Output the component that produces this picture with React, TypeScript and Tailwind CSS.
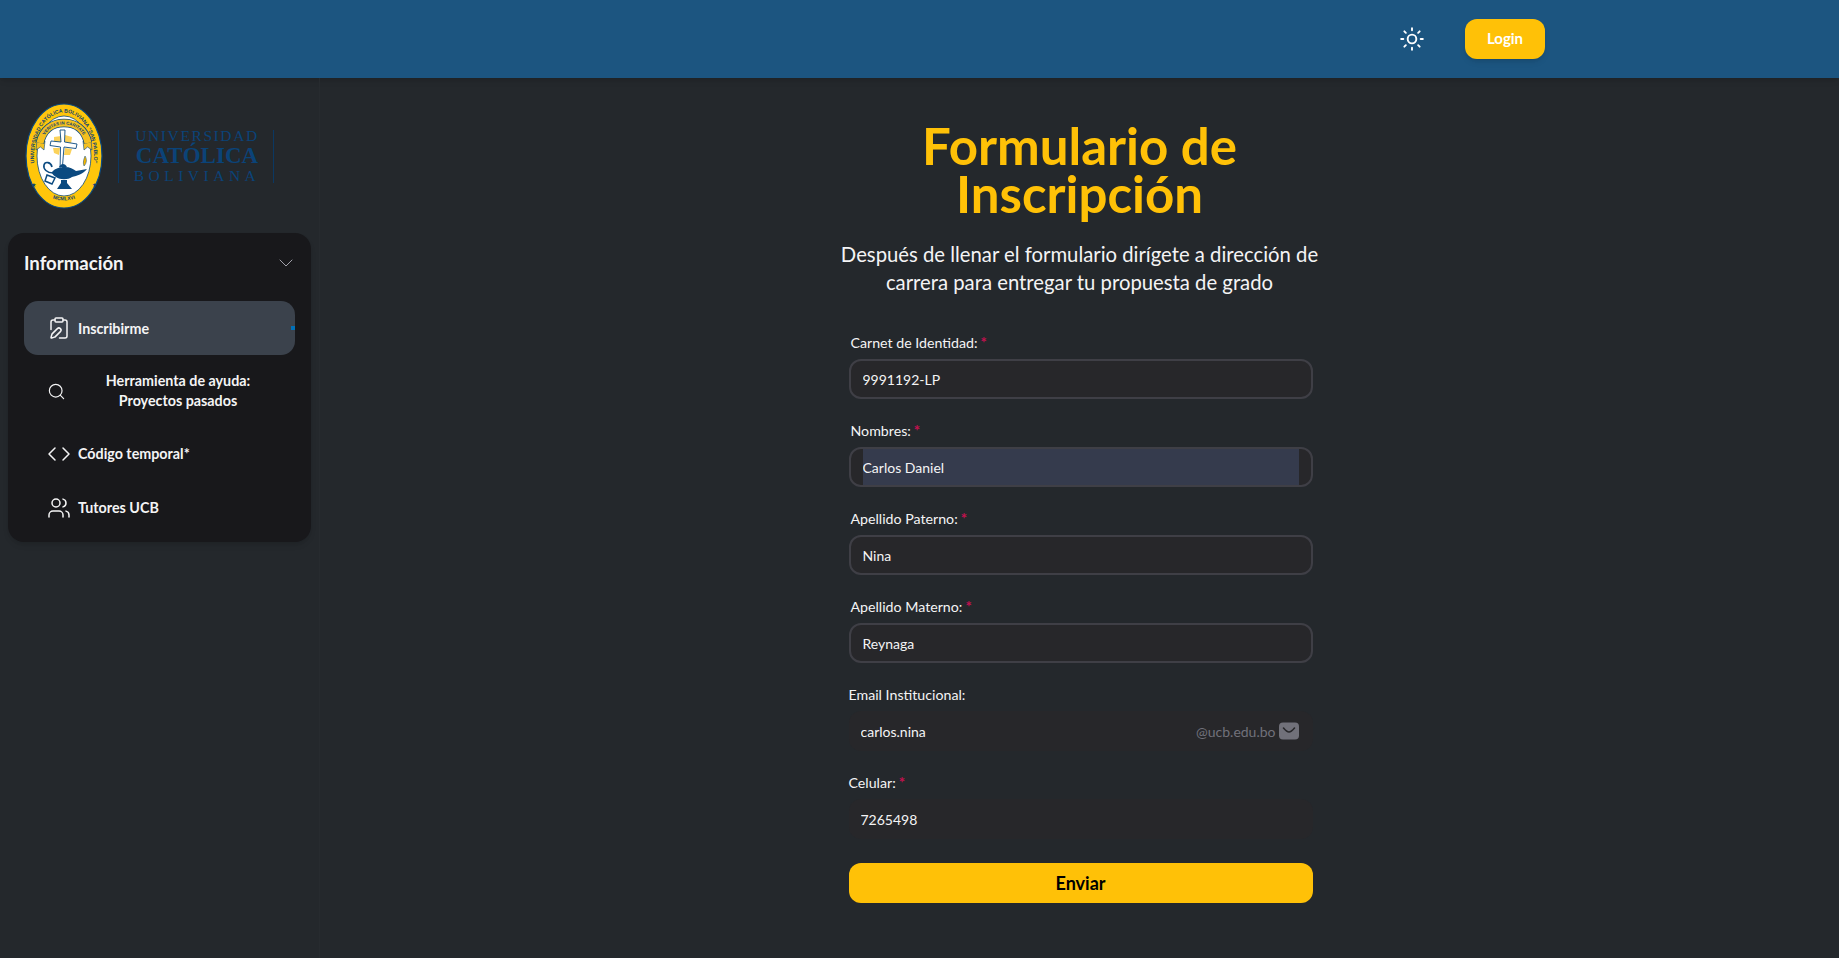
import { ChevronDown, ClipboardPen, Code, Search, Sun, Users } from 'lucide-react';
import type { ReactNode } from 'react';

const FONT = "font-['Lato','Noto_Sans',sans-serif]";

function Crest() {
  return (
    <svg viewBox="0 0 78 106" className="h-[106px] w-[78px] shrink-0">
      <defs>
        <path id="crest-arc" d="M13 74.750 A30 43.500 0 1 1 65 74.750" fill="none" />
        <path id="crest-motto" d="M16.500 41.500 C19.500 27.500 28 21.500 39 21.500 C50 21.500 58.500 27.500 61.500 41.500" fill="none" />
        <path id="crest-year" d="M24 94 Q39 101 54 94" fill="none" />
      </defs>
      <ellipse cx="39" cy="53" rx="38" ry="52" fill="#ffc60b" stroke="#0b4a80" strokeWidth="1.200" />
      <ellipse cx="39" cy="53" rx="27" ry="40" fill="#ffffff" stroke="#0b4a80" strokeWidth="0.800" />
      <text fontSize="5.200" fontWeight="700" fill="#0b3f70" fontFamily="Liberation Sans, sans-serif">
        <textPath href="#crest-arc" startOffset="50%" textAnchor="middle">
          UNIVERSIDAD CATÓLICA BOLIVIANA "SAN PABLO"
        </textPath>
      </text>
      <path d="M29 34 L36 33 L36 40 L29 41 Z M40 32 L47 34 L46 41 L40 40 Z M28 45 L35 45 L34 52 L29 50 Z M40 45 L47 46 L45 52 L39 52 Z" fill="#fbd25a" />
      <path d="M12 37 L20 38 L19 47 L15.500 44 L11 47 Z M66 37 L58 38 L59 47 L62.500 44 L67 47 Z" fill="#f4c020" stroke="#0b4a80" strokeWidth="0.600" />
      <path d="M15 40 C18 26 28 20 39 20 C50 20 60 26 63 40" fill="none" stroke="#0b4a80" strokeWidth="8.500" />
      <path d="M15 40 C18 26 28 20 39 20 C50 20 60 26 63 40" fill="none" stroke="#f4c020" strokeWidth="7" />
      <text fontSize="4.300" fontWeight="700" fill="#0b3f70" fontFamily="Liberation Sans, sans-serif">
        <textPath href="#crest-motto" startOffset="50%" textAnchor="middle">
          VERITAS IN CARITATE
        </textPath>
      </text>
      <path
        d="M35 27 L40 27 L39.500 39 L52 41 L51 45.500 L39 44 L37 69 L35 69 L35.500 44 L25 42.500 L26 38 L36 39 Z"
        fill="#ffffff"
        stroke="#0b4a80"
        strokeWidth="0.900"
      />
      <path d="M27 69 C30 65 36 64 40 64 C45 64 48 66 51 68 L62 66 C58 71 52 73 47 74 C43 77 35 77 31 74 C28 72 27 71 27 69 Z" fill="#0b4a80" />
      <path d="M34 64 C36 60 40 60 42 64 Z" fill="#0b4a80" />
      <path d="M36 77 L42 77 L42 80 L47 86 L32 86 L36 80 Z" fill="#0b4a80" />
      <path d="M28 70 C22 70 18 66 19 62 C20 58 26 59 27 64" fill="none" stroke="#0b4a80" strokeWidth="1.600" />
      <path d="M22 72 L30 75 L27 81 L20 78 Z" fill="none" stroke="#0b4a80" strokeWidth="1.500" />
      <path d="M59 63 C57.500 59 59 56 60 53 C62 56 62 60 59 63 Z" fill="#f4b400" stroke="#0b4a80" strokeWidth="0.500" />
      <text x="6" y="84" fontSize="6" fill="#0b3f70">★</text>
      <text x="66.500" y="84" fontSize="6" fill="#0b3f70">★</text>
      <text fontSize="5" fontWeight="700" fill="#0b3f70" fontFamily="Liberation Sans, sans-serif">
        <textPath href="#crest-year" startOffset="50%" textAnchor="middle">
          MCMLXVI
        </textPath>
      </text>
    </svg>
  );
}

function Logo() {
  return (
    <div className="flex h-[155px] items-center pl-[25px] pt-[1px]">
      <Crest />
      <div className="ml-[15px] flex h-[53px] w-[156px] flex-col items-center border-x border-[#0b3862] pl-[2px] font-['Liberation_Serif',serif] text-[#0b4378]">
        <span className="mt-[-3px] text-[15.500px] leading-[18px] tracking-[1.600px]">UNIVERSIDAD</span>
        <span className="mt-[-1px] text-[23px] font-bold leading-[24px]">CATÓLICA</span>
        <span className="mt-[-1px] text-[15.500px] leading-[18px] tracking-[4.500px]">BOLIVIANA</span>
      </div>
    </div>
  );
}

function NavItem({ icon, active, children }: { icon: ReactNode; active?: boolean; children: ReactNode }) {
  return (
    <div
      className={`relative flex items-center rounded-[14px] text-[14.300px] font-bold leading-[20px] text-[#f4f4f5] ${
        active ? 'h-[54px] bg-[#3b424c]' : 'min-h-[54px]'
      }`}
    >
      <span className="flex w-[54px] shrink-0 items-center justify-center pl-[16px]">{icon}</span>
      <span className={active ? 'pt-[1px]' : ''}>{children}</span>
      {active && <span className="absolute right-0 top-[25px] h-[4px] w-[4px] bg-[#0070b8]" />}
    </div>
  );
}

function Sidebar() {
  return (
    <aside className="w-[320px] shrink-0 border-r border-[#272b2f]">
      <Logo />
      <div className="ml-[8px] w-[303px] rounded-[16px] bg-[#18181b] px-[16px] pb-[7px] pt-[14px] shadow-md">
        <div className="flex h-[34px] items-center justify-between">
          <span className="text-[18.600px] font-bold text-[#f4f4f5]">Información</span>
          <ChevronDown size={24} strokeWidth={1} className="mr-[-3px] mt-[-2px] text-[#a1a1aa]" />
        </div>
        <nav className="mt-[20px] flex flex-col">
          <NavItem active icon={<ClipboardPen size={24} strokeWidth={1.500} />}>
            Inscribirme
          </NavItem>
          <NavItem icon={<Search size={19} strokeWidth={1.500} className="mr-[5px]" />}>
            <span className="block h-[72px] w-[200px] pt-[16px] text-center">
              Herramienta de ayuda:
              <br />
              Proyectos pasados
            </span>
          </NavItem>
          <NavItem icon={<Code size={24} strokeWidth={1.500} />}>Código temporal*</NavItem>
          <NavItem icon={<Users size={24} strokeWidth={1.500} />}>Tutores UCB</NavItem>
        </nav>
      </div>
    </aside>
  );
}

function Label({ text, required, flat }: { text: string; required?: boolean; flat?: boolean }) {
  return (
    <label className={`mb-[7px] block h-[20px] text-[14.200px] leading-[21px] text-[#f4f4f5] ${flat ? '' : 'pl-[2px]'}`}>
      {text}
      {required && <span className="ml-[3px] text-[15px] font-bold text-[#c4104f]">*</span>}
    </label>
  );
}

function BorderedField({ label, value, autofill }: { label: string; value: string; autofill?: boolean }) {
  return (
    <div className="mb-[21px]">
      <Label text={label} required />
      <div className="flex h-[40px] items-center rounded-[12px] border-2 border-[#3f3f46] bg-[#27272a] px-[12px]">
        <input
          readOnly
          value={value}
          className={`h-full w-full pt-[1px] text-[14px] text-[#f4f4f5] outline-none ${autofill ? 'bg-[#353b4d]' : 'bg-transparent'}`}
        />
      </div>
    </div>
  );
}

function FlatField({ label, value, required, suffix }: { label: string; value: string; required?: boolean; suffix?: ReactNode }) {
  return (
    <div className="mb-[21px]">
      <Label text={label} required={required} flat />
      <div className="flex h-[40px] items-center rounded-[12px] bg-[#27272a] px-[12px]">
        <input readOnly value={value} className="h-full min-w-0 flex-1 bg-transparent pt-[1px] text-[14px] text-[#f4f4f5] outline-none" />
        {suffix}
      </div>
    </div>
  );
}

function EmailSuffix() {
  return (
    <span className="flex items-center gap-[3px] text-[14px] text-[#71717a]">
      @ucb.edu.bo
      <svg viewBox="0 0 20 18" className="mr-[2px] h-[18px] w-[20px]">
        <rect width="20" height="17" y="0.500" rx="4" fill="#71717a" />
        <path d="M4.500 6 C7 9 8.500 10 10 10 C11.500 10 13 9 15.500 6" fill="none" stroke="#27272a" strokeWidth="1.600" strokeLinecap="round" />
      </svg>
    </span>
  );
}

function InscriptionForm() {
  return (
    <main className="flex flex-1 justify-center">
      <div className="h-[880px] w-[520px] pt-[44px]">
        <h1 className="text-center text-[51px] font-bold leading-[48px] text-[#ffc107]">
          Formulario de
          <br />
          Inscripción
        </h1>
        <p className="mt-[22px] text-center text-[20.300px] leading-[28px] text-[#f4f4f5]">
          Después de llenar el formulario dirígete a dirección de
          <br />
          carrera para entregar tu propuesta de grado
        </p>
        <form className="ml-[29px] mt-[36px] w-[464px]">
          <BorderedField label="Carnet de Identidad:" value="9991192-LP" />
          <BorderedField label="Nombres:" value="Carlos Daniel" autofill />
          <BorderedField label="Apellido Paterno:" value="Nina" />
          <BorderedField label="Apellido Materno:" value="Reynaga" />
          <FlatField label="Email Institucional:" value="carlos.nina" suffix={<EmailSuffix />} />
          <FlatField label="Celular:" value="7265498" required />
          <button type="button" className="mt-[3px] h-[40px] w-full rounded-[12px] bg-[#ffc107] text-[18px] font-bold text-black">
            Enviar
          </button>
        </form>
      </div>
    </main>
  );
}

export default function App() {
  return (
    <div className={`flex h-[958px] flex-col overflow-hidden bg-[#24282c] ${FONT}`}>
      <header className="flex h-[78px] shrink-0 items-center justify-end bg-[#1c5580] pr-[294px] shadow-md">
        <Sun size={26} strokeWidth={1.750} className="mr-[40px] text-white" />
        <button type="button" className="h-[40px] w-[80px] rounded-[12px] bg-[#ffc107] pb-[1px] text-[15px] font-bold text-white shadow-md">
          Login
        </button>
      </header>
      <div className="flex min-h-0 flex-1">
        <Sidebar />
        <InscriptionForm />
      </div>
    </div>
  );
}
